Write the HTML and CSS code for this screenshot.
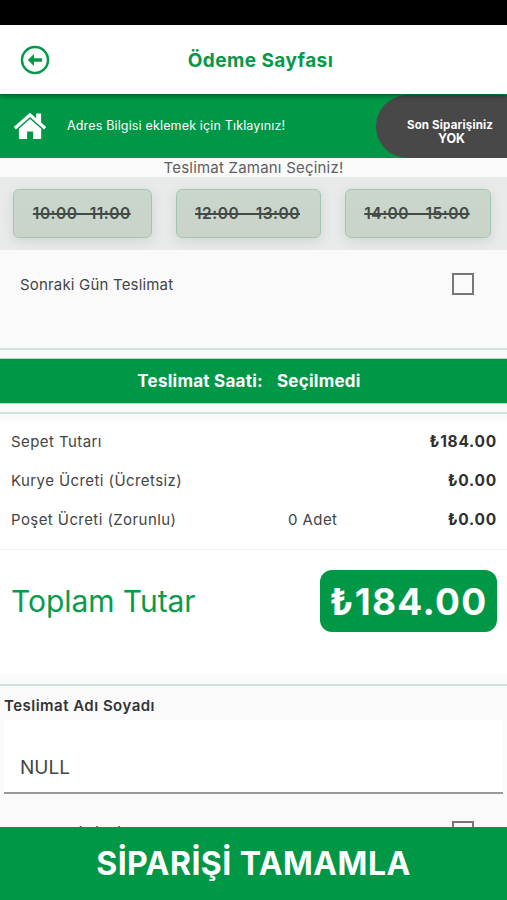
FILE: index.html
```html
<!DOCTYPE html>
<html lang="tr">
<head>
<meta charset="utf-8">
<title>Ödeme Sayfası</title>
<link rel="stylesheet" href="styles.css">
</head>
<body>
<div class="app">
  <div class="statusbar"></div>
  <header class="topbar">
    <svg class="back" viewBox="0 0 30 30"><circle cx="15" cy="15" r="13" fill="none" stroke="#049948" stroke-width="2.5"/><path d="M7.800 15 14 8.900v4.300h8.100v3.600H14v4.300z" fill="#049948"/></svg>
    <h1 class="title"><span>Ödeme Sayfası</span></h1>
  </header>
  <section class="address">
    <svg class="home" viewBox="0 0 34 28"><path d="M17 .8 23.200 6.200V1.400h4.900v9.100L33.200 15l-2.100 2.400L17 5 2.900 17.400.8 15z" fill="#fff"/><path d="M17 7 28.200 16.800V26q0 1-1 1h-7.100v-7.600h-6V27H6.900q-1 0-1-1v-9.200z" fill="#fff"/></svg>
    <span class="address-text">Adres Bilgisi eklemek için Tıklayınız!</span>
    <div class="last-order"><span class="last-label">Son Siparişiniz</span><span class="last-value">YOK</span></div>
  </section>
  <p class="slot-heading"><span>Teslimat Zamanı Seçiniz!</span></p>
  <div class="slots">
    <div class="slot slot-a"><s>10:00 -11:00</s></div>
    <div class="slot slot-b"><s>12:00 - 13:00</s></div>
    <div class="slot slot-c"><s>14:00 - 15:00</s></div>
  </div>
  <div class="next-day"><span>Sonraki Gün Teslimat</span><i class="check"></i></div>
  <div class="delivery"><div class="delivery-bar"><span>Teslimat Saati:</span><span>Seçilmedi</span></div></div>
  <section class="summary">
    <div class="line"><span>Sepet Tutarı</span><b>₺184.00</b></div>
    <div class="line"><span>Kurye Ücreti (Ücretsiz)</span><b>₺0.00</b></div>
    <div class="line"><span>Poşet Ücreti (Zorunlu)</span><span>0 Adet</span><b>₺0.00</b></div>
  </section>
  <section class="total"><span class="total-label">Toplam Tutar</span><span class="total-value"><span>₺184.00</span></span></section>
  <section class="form">
    <label class="form-label"><span>Teslimat Adı Soyadı</span></label>
    <div class="field"><span>NULL</span></div>
    <div class="clipped"><span>Fatura Bilgileri</span><i class="check"></i></div>
  </section>
  <footer class="complete"><span>SİPARİŞİ TAMAMLA</span></footer>
</div>
</body>
</html>
```
FILE: styles.css
```css
* { box-sizing: border-box; }
body { margin: 0; font-family: Inter, "Liberation Sans", sans-serif; background: #fafafa; color: #333; }
.app { width: 507px; height: 900px; overflow: hidden; display: flex; flex-direction: column; }
.app > * { flex: none; }
.statusbar { height: 25px; background: #000; }
.topbar { height: 69px; background: #fff; display: grid; grid-template-columns: 70px 1fr 56px; align-items: center; position: relative; box-shadow: 0 2px 5px rgba(0,0,0,.4); }
.back { width: 30px; height: 30px; margin-left: 20px; }
.title { margin: 0; padding-top: 1px; text-align: center; font-size: 19px; font-weight: 700; color: #049948; letter-spacing: .42px; }
.address { height: 64px; background: #009846; display: flex; align-items: center; color: #fff; }
.home { width: 34px; height: 28px; margin-left: 13px; }
.address-text { margin-left: 20px; padding-bottom: 2px; flex: 1; font-size: 12.5px; letter-spacing: .16px; white-space: nowrap; }
.last-order { width: 131px; height: 63px; background: #484848; border-radius: 32px 0 0 32px; display: flex; flex-direction: column; align-items: center; padding: 23px 0 0 17px; font-weight: 700; line-height: 14px; }
.last-label { font-size: 11.5px; letter-spacing: .18px; white-space: nowrap; }
.last-value { font-size: 12.5px; margin-left: 3px; }
.slot-heading { margin: 0; height: 19px; line-height: 19px; text-align: center; font-size: 15px; letter-spacing: .21px; color: #606060; }
.slots { height: 73px; background: #e9ebea; display: flex; align-items: flex-start; padding: 12px 0 0 13px; gap: 24px; overflow: hidden; }
.slot { height: 49px; border: 1px solid #a5c4b2; border-radius: 6px; background: linear-gradient(#c9d7cd, #cad3ca); box-shadow: 0 3px 12px rgba(70,90,75,.16); display: flex; align-items: center; justify-content: center; font-size: 15.5px; font-weight: 600; letter-spacing: .5px; color: #444b46; white-space: nowrap; padding-right: 1px; }
.slot s { text-decoration-thickness: 1.5px; }
.slot-a { width: 138.5px; }
.slot-b { width: 145px; }
.slot-c { width: 146px; }
.next-day { height: 98px; padding: 23px 33px 0 20px; display: flex; justify-content: space-between; align-items: flex-start; font-size: 15px; line-height: 24px; letter-spacing: .18px; color: #444; }
.check { width: 22px; height: 22px; border: 2px solid #777; background: #fafafa; display: block; }
.delivery { height: 66px; border-top: 2px solid #cde4d9; border-bottom: 2px solid #cde4d9; padding: 8px 0; }
.delivery-bar { height: 46px; background: #009846; border: solid #b4dec6; border-width: 1px 0; color: #fff; font-weight: 700; font-size: 17px; letter-spacing: .25px; display: flex; align-items: center; justify-content: center; gap: 14px; padding: 0 9px 1px 0; }
.summary { height: 136px; background: linear-gradient(#fafafa 0 4px, #fff 10px); padding-top: 8px; border-bottom: 1px solid #f3f3f3; }
.line { height: 39px; display: grid; grid-template-columns: 277px 110px 1fr; align-items: center; padding: 0 10px 0 11px; font-size: 15px; letter-spacing: .42px; color: #444; }
.line b { grid-column: 3; text-align: right; font-weight: 700; font-size: 15.5px; color: #303030; letter-spacing: .75px; }
.total { height: 124px; background: #fff; display: flex; justify-content: space-between; padding: 20px 10px 0 11px; align-items: flex-start; }
.total-label { font-size: 30px; line-height: 63px; letter-spacing: -.05px; color: #089b4b; }
.total-value { width: 177px; height: 62px; background: #009846; border-radius: 12px; display: flex; align-items: center; justify-content: center; color: #fff; font-weight: 700; font-size: 37px; letter-spacing: 1.3px; padding-top: 1px; }
.form { padding-top: 10px; background: linear-gradient(#fafafa 0 10px, #cde2d9 10px 12px, #fafafa 12px); }
.form-label { display: block; height: 36px; padding: 12px 0 0 4px; line-height: 20px; font-size: 15px; font-weight: 600; letter-spacing: .48px; color: #333; }
.field { height: 74px; margin: 0 4px; background: #fff; border-bottom: 2px solid #999; padding-left: 16px; display: flex; align-items: center; padding-top: 22px; font-size: 19px; color: #444; }
.clipped { height: 33px; padding: 27px 33px 0 20px; display: flex; justify-content: space-between; overflow: hidden; font-size: 15px; line-height: 24px; color: #444; }
.complete { height: 73px; background: #009846; color: #fff; font-size: 32px; font-weight: 700; letter-spacing: .45px; display: flex; align-items: center; justify-content: center; }
```
